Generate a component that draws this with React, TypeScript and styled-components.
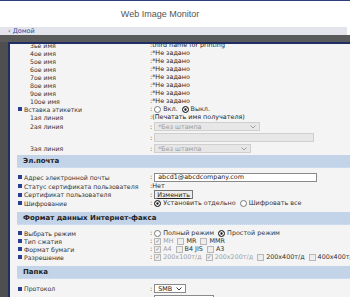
import styled, { createGlobalStyle, css } from 'styled-components'

const GlobalStyle = createGlobalStyle`
  html, body {
    margin: 0;
    padding: 0;
    background: #ffffff;
  }
  body {
    font-family: "DejaVu Sans", Verdana, sans-serif;
    color: #333333;
  }
`

const Page = styled.div`
  width: 350px;
  height: 297px;
  overflow: hidden;
  display: flex;
  flex-direction: column;
  border-top: 1px solid #2d3f7a;
  box-sizing: border-box;
`

const Header = styled.header`
  height: 26px;
  display: flex;
  align-items: center;
  justify-content: center;
  padding-right: 30px;
  background: #ffffff;
`

const Title = styled.h1`
  margin: 0;
  font-family: "Liberation Sans", Arial, sans-serif;
  font-weight: normal;
  font-size: 9px;
  color: #555555;
`

const NavBar = styled.nav`
  height: 8px;
  margin-right: 3px;
  background: #e4e4ec;
  display: flex;
  align-items: center;
  padding-left: 8px;
`

const HomeLink = styled.a`
  font-size: 6.5px;
  color: #2f4c9c;
  text-decoration: none;
`

const DarkBand = styled.div`
  height: 7px;
  background: #5a5a5a;
`

const Main = styled.div`
  flex: 1;
  display: flex;
  min-height: 0;
  background: #525252;
`

const Sidebar = styled.div`
  width: 8px;
  background: #4f4f4f;
`

const ContentBox = styled.div`
  flex: 1;
  overflow: hidden;
  background: #f4f4f4;
  border-left: 2px solid #1f2f66;
  border-top: 2px solid #1f2f66;
`

const Scroller = styled.div`
  margin-top: -3px;
`

const Section = styled.section<{ $tail?: number }>`
  padding-bottom: ${(p) => p.$tail ?? 5}px;
`

const SectionTitle = styled.div`
  margin-left: 7px;
  height: 12px;
  padding-left: 6px;
  display: flex;
  align-items: center;
  background: #c3d3e8;
  border-bottom: 1px dotted #d8e2f0;
  font-size: 7px;
  font-weight: bold;
  color: #222222;
  white-space: nowrap;
  margin-bottom: 4px;
`

const Row = styled.div<{ $h?: number }>`
  display: grid;
  grid-template-columns: 132px 1fr;
  height: ${(p) => p.$h ?? 8}px;
  padding-left: 8px;
  white-space: nowrap;
`

const Label = styled.div<{ $sub?: boolean }>`
  display: flex;
  align-items: center;
  gap: 2px;
  padding-left: ${(p) => (p.$sub ? 12 : 0)}px;
  font-size: 6.2px;
  color: #333333;
`

const Bullet = styled.span`
  width: 4px;
  height: 4px;
  background: #2a3f8f;
  flex: none;
`

const Value = styled.div`
  display: flex;
  align-items: center;
  gap: 2px;
  font-size: 6.4px;
  color: #222222;
  overflow: hidden;
`

const Option = styled.span<{ $muted?: boolean }>`
  display: inline-flex;
  align-items: center;
  gap: 2px;
  margin-right: 2px;
  color: ${(p) => (p.$muted ? '#a0a0a0' : '#333333')};
`

const Radio = styled.span<{ $on?: boolean }>`
  width: 5px;
  height: 5px;
  border-radius: 50%;
  border: 1px solid #7a7a7a;
  background: #ffffff;
  flex: none;
  ${(p) =>
    p.$on &&
    css`
      background: #111111;
      box-shadow: inset 0 0 0 1.3px #ffffff;
      border-color: #333333;
    `}
`

const Box = styled.span`
  width: 5px;
  height: 5px;
  border: 1px solid #b8b8b8;
  background: #eeeeee;
  flex: none;
  display: inline-flex;
  align-items: center;
  justify-content: center;
  font-size: 6px;
  line-height: 1;
  color: #8a8a8a;
`

const Field = styled.div<{ $w: number; $disabled?: boolean }>`
  width: ${(p) => p.$w}px;
  height: 9px;
  box-sizing: border-box;
  display: flex;
  align-items: center;
  justify-content: space-between;
  padding: 0 3px;
  border: 1px solid ${(p) => (p.$disabled ? '#cfcfcf' : '#8a8a8a')};
  background: ${(p) => (p.$disabled ? '#e7e7e7' : '#ffffff')};
  color: ${(p) => (p.$disabled ? '#9a9a9a' : '#222222')};
`

const Button = styled.span`
  height: 9px;
  box-sizing: border-box;
  display: inline-flex;
  align-items: center;
  padding: 0 2px;
  border: 1px solid #777777;
  background: #eeeeee;
  color: #222222;
  text-decoration: underline;
`

const Chevron = ({ muted }: { muted?: boolean }) => (
  <svg width="6" height="4" viewBox="0 0 6 4">
    <path d="M0.5 0.5 L3 3 L5.5 0.5" fill="none" stroke={muted ? '#a0a0a0' : '#333'} strokeWidth="1" />
  </svg>
)

const SubRow = ({ label, children, h }: { label: string; children: React.ReactNode; h?: number }) => (
  <Row $h={h}>
    <Label $sub>{label}</Label>
    <Value>{children}</Value>
  </Row>
)

const ItemRow = ({ label, children, h }: { label: string; children: React.ReactNode; h?: number }) => (
  <Row $h={h}>
    <Label>
      <Bullet />
      {label}
    </Label>
    <Value>{children}</Value>
  </Row>
)

const names = ['4ое имя', '5ое имя', '6ое имя', '7ое имя', '8ое имя', '9ое имя', '10ое имя']

export default function App() {
  return (
    <>
      <GlobalStyle />
      <Page>
        <Header>
          <Title>Web Image Monitor</Title>
        </Header>
        <NavBar>
          <HomeLink href="#">‹ Домой</HomeLink>
        </NavBar>
        <DarkBand />
        <Main>
          <Sidebar />
          <ContentBox>
            <Scroller>
              <Section $tail={1}>
                <SubRow label="3ье имя">:third name for printing</SubRow>
                {names.map((n) => (
                  <SubRow key={n} label={n}>
                    :*Не задано
                  </SubRow>
                ))}
                <ItemRow label="Вставка этикетки">
                  :
                  <Option>
                    <Radio />
                    Вкл.
                  </Option>
                  <Option>
                    <Radio $on />
                    Выкл.
                  </Option>
                </ItemRow>
                <SubRow label="1ая линия">:(Печатать имя получателя)</SubRow>
                <SubRow label="2ая линия" h={11}>
                  :
                  <Field $w={106} $disabled>
                    *Без штампа
                    <Chevron muted />
                  </Field>
                </SubRow>
                <SubRow label="" h={11}>
                  :
                  <Field $w={160} $disabled />
                </SubRow>
                <SubRow label="3ая линия" h={11}>
                  :
                  <Field $w={97} $disabled>
                    *Без штампа
                    <Chevron muted />
                  </Field>
                </SubRow>
              </Section>

              <Section>
                <SectionTitle>Эл.почта</SectionTitle>
                <ItemRow label="Адрес электронной почты" h={10}>
                  :
                  <Field $w={163}>abcd1@abcdcompany.com</Field>
                </ItemRow>
                <ItemRow label="Статус сертификата пользователя">:Нет</ItemRow>
                <ItemRow label="Сертификат пользователя" h={9}>
                  :<Button>Изменить</Button>
                </ItemRow>
                <ItemRow label="Шифрование">
                  :
                  <Option>
                    <Radio $on />
                    Установить отдельно
                  </Option>
                  <Option>
                    <Radio />
                    Шифровать все
                  </Option>
                </ItemRow>
              </Section>

              <Section>
                <SectionTitle>Формат данных Интернет-факса</SectionTitle>
                <ItemRow label="Выбрать режим">
                  :
                  <Option>
                    <Radio />
                    Полный режим
                  </Option>
                  <Option>
                    <Radio $on />
                    Простой режим
                  </Option>
                </ItemRow>
                <ItemRow label="Тип сжатия">
                  :
                  <Option $muted>
                    <Box>✓</Box>MH
                  </Option>
                  <Option>
                    <Box />
                    MR
                  </Option>
                  <Option>
                    <Box />
                    MMR
                  </Option>
                </ItemRow>
                <ItemRow label="Формат бумаги">
                  :
                  <Option $muted>
                    <Box>✓</Box>A4
                  </Option>
                  <Option>
                    <Box />
                    B4 JIS
                  </Option>
                  <Option>
                    <Box />
                    A3
                  </Option>
                </ItemRow>
                <ItemRow label="Разрешение">
                  :
                  <Option $muted>
                    <Box>✓</Box>200x100т/д
                  </Option>
                  <Option $muted>
                    <Box>✓</Box>200x200т/д
                  </Option>
                  <Option>
                    <Box />
                    200x400т/д
                  </Option>
                  <Option>
                    <Box />
                    400x400т/д
                  </Option>
                </ItemRow>
              </Section>

              <Section>
                <SectionTitle>Папка</SectionTitle>
                <ItemRow label="Протокол" h={11}>
                  :
                  <Field $w={32}>
                    SMB
                    <Chevron />
                  </Field>
                </ItemRow>
                <ItemRow label="№ порта" h={11}>
                  :
                  <Field $w={60}>445</Field>
                </ItemRow>
              </Section>
            </Scroller>
          </ContentBox>
        </Main>
      </Page>
    </>
  )
}
